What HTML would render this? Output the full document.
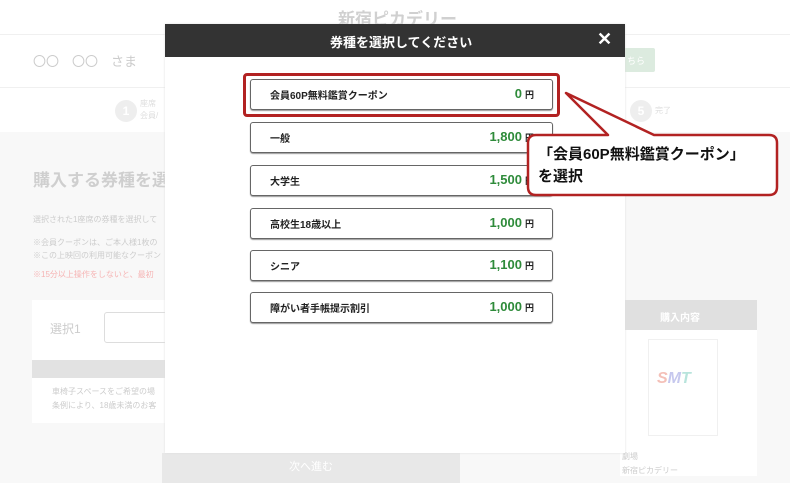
<!DOCTYPE html>
<html><head><meta charset="utf-8"><style>
*{margin:0;padding:0;box-sizing:border-box}
body{width:790px;height:476px;overflow:hidden;position:relative;background:#f8f8f8;font-family:"Liberation Sans","Noto Sans CJK JP",sans-serif}
.a{position:absolute;white-space:nowrap}
.btn{position:absolute;left:250px;width:303px;height:31px;border:1.5px solid #666;border-radius:3px;background:#fff;box-shadow:0 1px 1px #999}
.btn .l{position:absolute;left:19px;top:10px;line-height:14px;font-size:10px;font-weight:bold;color:#222}
.btn .p{position:absolute;right:18px;top:6px;line-height:16px;font-size:13px;font-weight:bold;color:#2e8b3a}
.btn .p small{font-size:9px;color:#222;margin-left:3px}
</style></head><body>
<div class="a" style="left:0;top:0;width:790px;height:132px;background:#fff"></div>
<div class="a" style="left:0;top:34px;width:790px;height:1px;background:#f0f0f0"></div>
<div class="a" style="left:0;top:87px;width:790px;height:1px;background:#f0f0f0"></div>
<div class="a" style="left:338px;top:5px;font-size:17px;color:#d0d0d0;font-weight:bold">新宿ピカデリー</div>
<div class="a" style="left:33px;top:51px;font-size:13px;color:#ccc">〇〇　〇〇　さま</div>
<div class="a" style="left:615px;top:48px;width:40px;height:24px;background:#dcebdf;border-radius:2px;color:#fff;font-size:9px;padding:6px 0 0 12px">ちら</div>
<div class="a" style="left:115px;top:100px;width:22px;height:22px;border-radius:50%;background:#eee;color:#fff;font-size:12px;font-weight:bold;text-align:center;line-height:22px">1</div>
<div class="a" style="left:140px;top:98px;font-size:8px;color:#ddd;line-height:12px">座席<br>会員/</div>
<div class="a" style="left:630px;top:100px;width:22px;height:22px;border-radius:50%;background:#eee;color:#fff;font-size:12px;font-weight:bold;text-align:center;line-height:22px">5</div>
<div class="a" style="left:655px;top:105px;font-size:8px;color:#ddd">完了</div>
<div class="a" style="left:33px;top:166px;font-size:17px;color:#cfcfcf;font-weight:bold">購入する券種を選</div>
<div class="a" style="left:33px;top:214px;font-size:8px;color:#ccc">選択された1座席の券種を選択して</div>
<div class="a" style="left:33px;top:236px;font-size:8px;color:#ccc;line-height:13px">※会員クーポンは、ご本人様1枚の<br>※この上映回の利用可能なクーポン</div>
<div class="a" style="left:33px;top:269px;font-size:8px;color:#f6b4b4">※15分以上操作をしないと、最初</div>
<div class="a" style="left:32px;top:300px;width:135px;height:60px;background:#fff"></div>
<div class="a" style="left:50px;top:320px;font-size:12px;color:#ccc">選択1</div>
<div class="a" style="left:104px;top:312px;width:70px;height:31px;border:1px solid #ddd;border-radius:3px;background:#fff"></div>
<div class="a" style="left:32px;top:360px;width:135px;height:18px;background:#e2e2e2"></div>
<div class="a" style="left:32px;top:378px;width:135px;height:45px;background:#fff"></div>
<div class="a" style="left:52px;top:385px;font-size:8px;color:#ccc;line-height:14px">車椅子スペースをご希望の場<br>条例により、18歳未満のお客</div>
<div class="a" style="left:620px;top:300px;width:137px;height:30px;background:#e0e0e0;color:#fff;font-size:10px;font-weight:bold;padding:9px 0 0 40px">購入内容</div>
<div class="a" style="left:620px;top:330px;width:137px;height:146px;background:#fff"></div>
<div class="a" style="left:648px;top:339px;width:70px;height:97px;border:1px solid #f0f0f0"></div>
<div class="a" style="left:657px;top:370px;font-size:16px;font-weight:bold;font-style:italic;color:#f4c0b8">S<span style="color:#c6c8ee">M</span><span style="color:#b8e4dc">T</span></div>
<div class="a" style="left:622px;top:450px;font-size:8px;color:#ccc;line-height:14px">劇場<br>新宿ピカデリー</div>
<div class="a" style="left:162px;top:453px;width:298px;height:30px;background:#e8e8e8;color:#fff;font-size:11px;text-align:center;padding-top:5px">次へ進む</div>

<div class="a" style="left:165px;top:24px;width:460px;height:429px;background:#fff;box-shadow:0 0 2px #ddd"></div>
<div class="a" style="left:165px;top:24px;width:460px;height:33px;background:#333"></div>
<div class="a" style="left:330px;top:32px;font-size:13px;font-weight:bold;color:#fff">券種を選択してください</div>
<div class="a" style="left:597px;top:29px;font-size:18px;font-weight:bold;color:#fff">✕</div>

<div class="a" style="left:243px;top:73px;width:317px;height:44px;border:3px solid #b22222;border-radius:4px"></div>
<div class="btn" style="top:79px"><span class="l a">会員60P無料鑑賞クーポン</span><span class="p a">0<small>円</small></span></div>
<div class="btn" style="top:122px"><span class="l a">一般</span><span class="p a">1,800<small>円</small></span></div>
<div class="btn" style="top:165px"><span class="l a">大学生</span><span class="p a">1,500<small>円</small></span></div>
<div class="btn" style="top:208px"><span class="l a">高校生18歳以上</span><span class="p a">1,000<small>円</small></span></div>
<div class="btn" style="top:250px"><span class="l a">シニア</span><span class="p a">1,100<small>円</small></span></div>
<div class="btn" style="top:292px"><span class="l a">障がい者手帳提示割引</span><span class="p a">1,000<small>円</small></span></div>

<svg class="a" style="left:0;top:0" width="790" height="476">
<path d="M536,135 H608 L566,93 L654,135 H769 Q777,135 777,143 V187 Q777,195 769,195 H536 Q528,195 528,187 V143 Q528,135 536,135 Z" fill="#fff" stroke="#b22222" stroke-width="2.5" stroke-linejoin="round"/>
</svg>
<div class="a" style="left:538px;top:144px;font-size:15px;font-weight:bold;color:#111;line-height:22px">「会員60P無料鑑賞クーポン」<br>を選択</div>
</body></html>
